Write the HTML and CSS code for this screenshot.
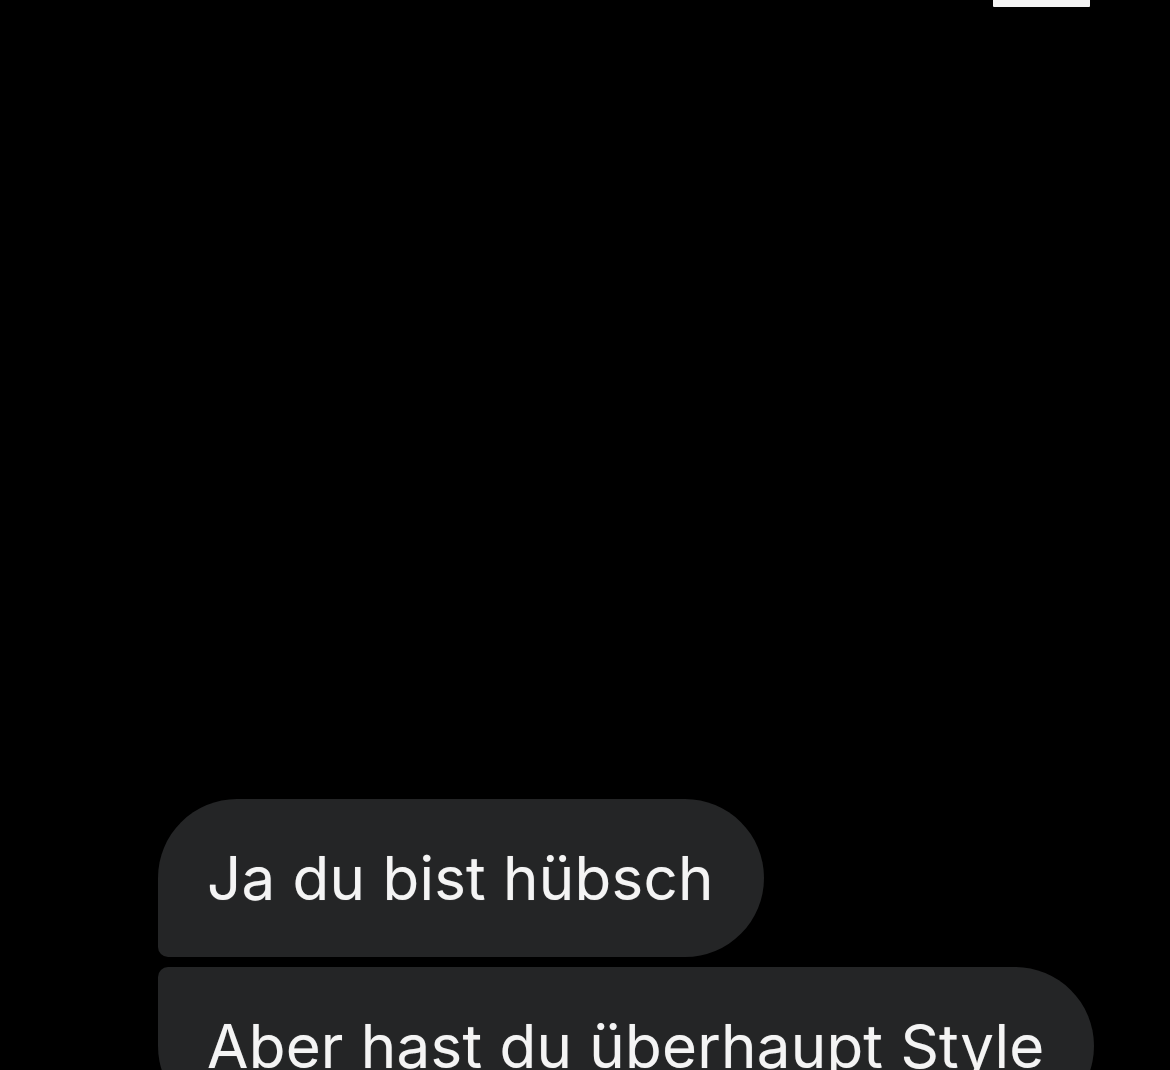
FILE: index.html
```html
<!DOCTYPE html>
<html lang="de">
<head>
<meta charset="utf-8">
<link rel="stylesheet" href="styles.css">
</head>
<body>
<div class="screen">
  <div class="topbar"><span class="indicator"></span></div>
  <div class="thread">
    <div class="bubble first"><span class="msg">Ja du bist hübsch</span></div>
    <div class="bubble second"><span class="msg">Aber hast du überhaupt Style</span></div>
  </div>
</div>
</body>
</html>
```
FILE: styles.css
```css
html, body {
  margin: 0;
  padding: 0;
  background: #000;
}
.screen {
  width: 1170px;
  height: 1070px;
  overflow: hidden;
  background: #000;
  display: flex;
  flex-direction: column;
}
.topbar {
  display: flex;
  justify-content: flex-end;
  padding-right: 80px;
  height: 8px;
}
.indicator {
  display: block;
  width: 97px;
  height: 7px;
  background: #f4f4f4;
  border-radius: 0 0 1px 1px;
}
.thread {
  margin-top: 792px;
  padding-left: 158px;
  display: flex;
  flex-direction: column;
  align-items: flex-start;
  gap: 10px;
}
.bubble {
  height: 158px;
  box-sizing: border-box;
  display: flex;
  align-items: center;
  padding: 0 50px 0 49px;
  background: #242526;
  color: #f4f4f4;
  font-family: Inter, "Noto Sans", sans-serif;
  font-size: 60px;
  font-weight: 400;
  letter-spacing: 0.25px;
  white-space: nowrap;
  text-shadow: 0 0 1px rgba(255, 255, 255, 0.35);
}
.bubble.first {
  border-radius: 79px 79px 79px 10px;
}
.bubble.second {
  border-radius: 10px 79px 79px 79px;
}
.msg {
  display: block;
  line-height: 1;
}
```
